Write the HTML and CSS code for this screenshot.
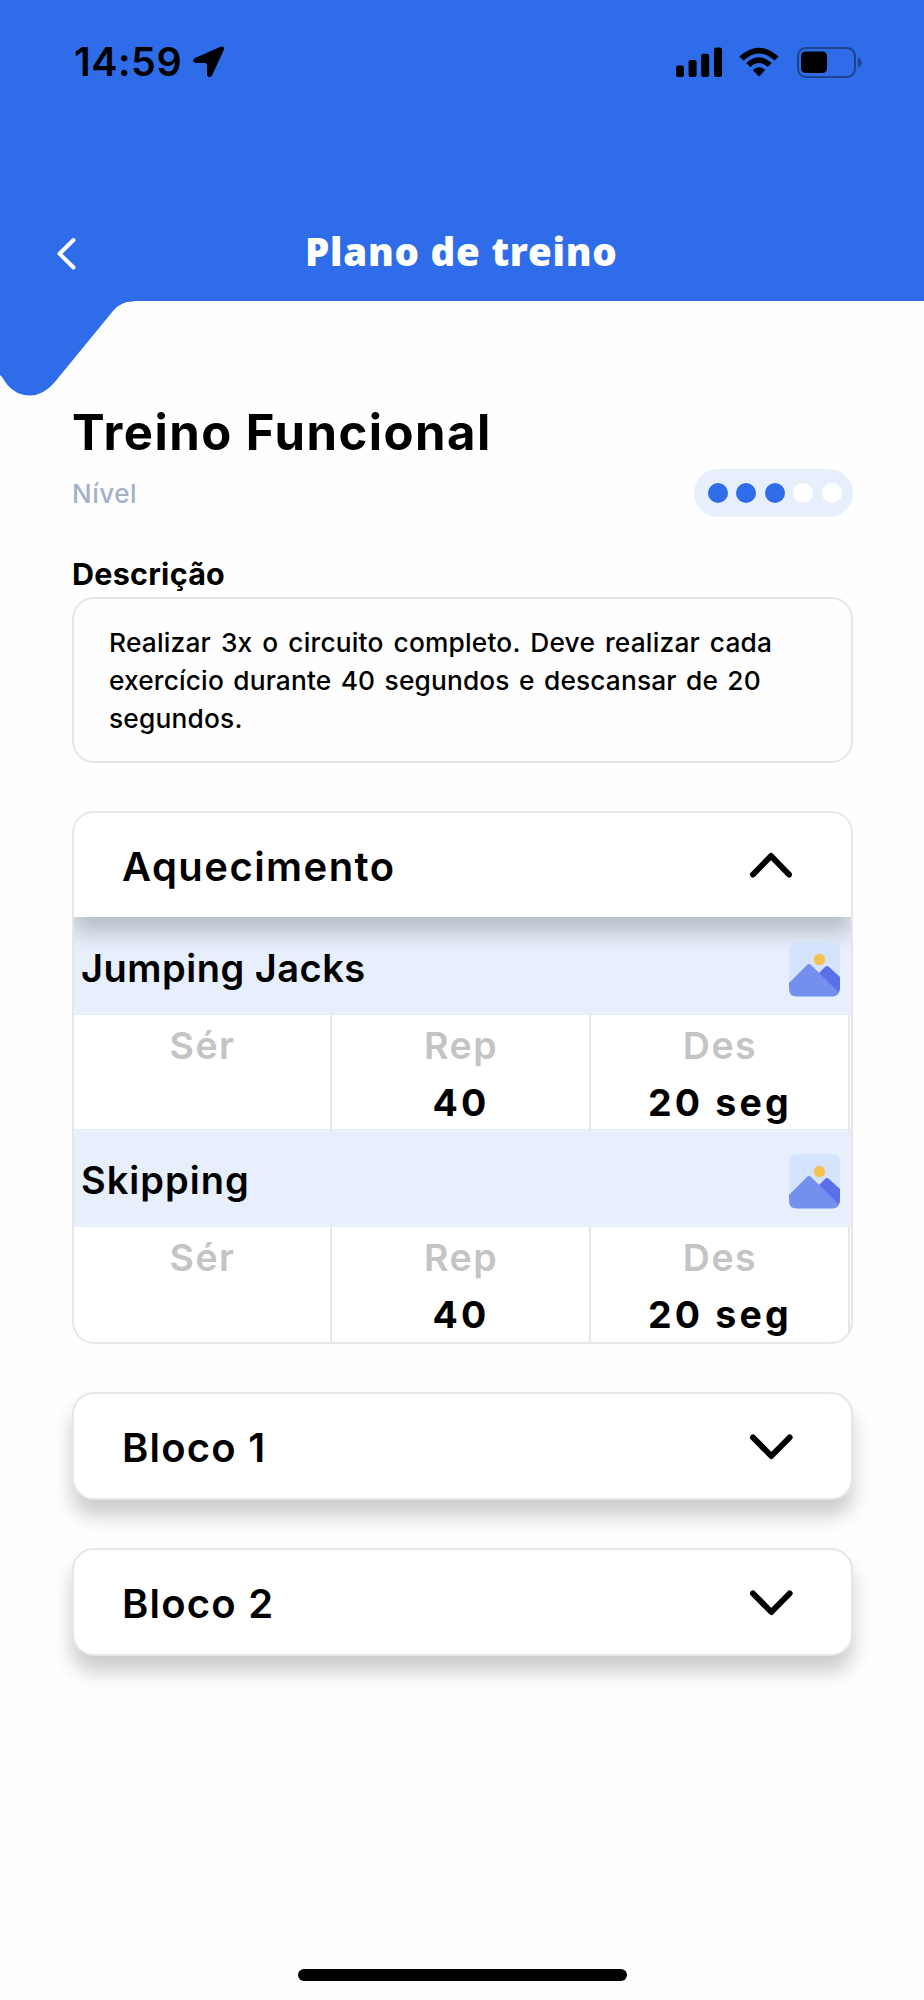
FILE: index.html
```html
<!DOCTYPE html>
<html lang="pt">

<head>
    <meta charset="UTF-8">
    <meta name="viewport" content="width=device-width, initial-scale=1.0">
    <title>Plano de treino</title>
    <link rel="stylesheet" href="styles.css">
</head>

<body>
    <header id="header">
        <div id="status-bar">
            <span id="time">14:59</span>
            <svg class="location" width="32" height="32" viewBox="0 0 32 32">
                <path d="M1.600 12.300 27.500 .7Q31.800-.5 30.800 4L19 29.500Q16.500 32.500 14 29.500V19Q14 17 12 17H3Q-2 15.500 1.600 12.300Z"/>
            </svg>
            <svg class="signal" width="47" height="30" viewBox="0 0 47 30">
                <rect x="0" y="18.500" width="8" height="11.500" rx="2.300"/>
                <rect x="12.600" y="13" width="8" height="17" rx="2.300"/>
                <rect x="25.200" y="6.700" width="8" height="23.300" rx="2.300"/>
                <rect x="38" y="0.500" width="8" height="29.500" rx="2.300"/>
            </svg>
            <svg class="wifi" width="40" height="30" viewBox="0 0 40 30">
                <path d="M.4 9.600Q20-8.200 39.600 9.600L35.500 13.400Q20-.6 4.500 13.400Z"/>
                <path d="M7.200 16.100Q20 4.500 32.800 16.100L28.600 20Q20 12.200 11.400 20Z"/>
                <path d="M13.800 23Q20 17.600 26.200 23L20 29.400Z"/>
            </svg>
            <svg class="battery" width="65" height="31" viewBox="0 0 65 31">
                <rect x="1" y="1" width="57" height="29" rx="8" fill="none" stroke="#1d438d" stroke-width="2"/>
                <rect x="4" y="4.500" width="26" height="21.500" rx="4.500"/>
                <path d="M61 10.500Q64.500 12 64.500 15.500T61 20.500Z" fill="#1d438d"/>
            </svg>
        </div>
        <div id="nav">
            <svg class="back" width="24" height="36" viewBox="0 0 24 36">
                <path d="M18.500 4 4.500 17.700 18.500 31.500" fill="none" stroke="#fff" stroke-width="4" stroke-linecap="round" stroke-linejoin="round"/>
            </svg>
            <h1>Plano de treino</h1>
        </div>
        <svg class="corner" width="134" height="96" viewBox="0 0 134 96">
            <path d="M0 0H134V1.500Q121 1 113 11L54 83Q43 95.500 30 95.500 16 95.500 7 84.500L2 77 0 75Z" fill="#2f6ce9"/>
        </svg>
    </header>

    <main id="main">
        <h2>Treino Funcional</h2>
        <div id="level">
            <span class="level-label">Nível</span>
            <div class="dots">
                <i class="on"></i><i class="on"></i><i class="on"></i><i></i><i></i>
            </div>
        </div>
        <h3>Descrição</h3>
        <p id="description">Realizar 3x o circuito completo. Deve realizar cada<br>
            <span class="line2">exercício durante 40 segundos e descansar de 20</span><br>
            segundos.</p>

        <section class="block open">
            <div class="block-head">
                <span class="name long">Aquecimento</span>
                <svg class="chevron" width="44" height="28" viewBox="0 0 44 28">
                    <path d="M4 23.500 22 5 40 23.500"/>
                </svg>
            </div>
            <div class="exercise">
                <span class="jumping">Jumping Jacks</span>
                <svg class="picture" width="51" height="55" viewBox="0 0 51 55">
                    <rect width="51" height="54.500" rx="7" fill="#d5e3fc"/>
                    <circle cx="30.500" cy="17.500" r="5.700" fill="#f5c24d"/>
                    <path d="M26 35 36 25Q38 23 40 25L51 35V46Q51 50 48 52Z" fill="#5b70e8"/>
                    <path d="M0 41 18 23Q20 21 22 23L50 50.500Q48 54.500 43 54.500H8Q0 54.500 0 47Z" fill="#7390ee"/>
                </svg>
            </div>
            <div class="sets">
                <div><span>Sér</span></div>
                <div><span>Rep</span><b>40</b></div>
                <div><span>Des</span><b>20 seg</b></div>
            </div>
            <div class="exercise">
                <span>Skipping</span>
                <svg class="picture" width="51" height="55" viewBox="0 0 51 55">
                    <rect width="51" height="54.500" rx="7" fill="#d5e3fc"/>
                    <circle cx="30.500" cy="17.500" r="5.700" fill="#f5c24d"/>
                    <path d="M26 35 36 25Q38 23 40 25L51 35V46Q51 50 48 52Z" fill="#5b70e8"/>
                    <path d="M0 41 18 23Q20 21 22 23L50 50.500Q48 54.500 43 54.500H8Q0 54.500 0 47Z" fill="#7390ee"/>
                </svg>
            </div>
            <div class="sets">
                <div><span>Sér</span></div>
                <div><span>Rep</span><b>40</b></div>
                <div><span>Des</span><b>20 seg</b></div>
            </div>
        </section>

        <section class="block">
            <div class="block-head">
                <span class="name">Bloco 1</span>
                <svg class="chevron" width="44" height="28" viewBox="0 0 44 28">
                    <path d="M4 5.500 22.300 24 40.600 5.500"/>
                </svg>
            </div>
        </section>

        <section class="block">
            <div class="block-head">
                <span class="name">Bloco 2</span>
                <svg class="chevron" width="44" height="28" viewBox="0 0 44 28">
                    <path d="M4 5.500 22.300 24 40.600 5.500"/>
                </svg>
            </div>
        </section>
    </main>
    <div id="home-bar"></div>
</body>

</html>
```
FILE: styles.css
```css
* {
    box-sizing: border-box;
}
body {
    margin: 0;
    height: 2000px;
    display: flex;
    flex-direction: column;
    background-color: #fefefe;
    color: #000;
    font-family: Inter, "Liberation Sans", sans-serif;
    white-space: nowrap;
    overflow: hidden;
}
h1, h2, h3, p {
    margin: 0;
}
svg {
    display: block;
    flex: none;
}

/* header */
#header {
    position: relative;
    height: 301px;
    background-color: #2f6ce9;
}
#status-bar {
    display: flex;
    align-items: center;
    height: 124px;
    padding-left: 74px;
}
#time {
    width: 119px;
    font-size: 39.500px;
    font-weight: 570;
    letter-spacing: 0.500px;
}
.signal {
    margin-left: 451px;
}
.wifi {
    margin-left: 16px;
}
.battery {
    margin-left: 18px;
}
#nav {
    display: flex;
    align-items: center;
    height: 60px;
    margin-top: 100px;
    padding-left: 55px;
}
h1 {
    margin-left: 226px;
    padding-bottom: 6px;
    font-family: "Noto Sans", "Open Sans", sans-serif;
    font-size: 38.500px;
    font-weight: 900;
    line-height: 54px;
    letter-spacing: 0.750px;
    color: white;
}
.corner {
    position: absolute;
    left: 0;
    top: 300px;
}

/* content */
#main {
    flex: 1;
    padding: 98px 71px 0 72px;
}
h2 {
    font-size: 49px;
    font-weight: 700;
    line-height: 68px;
    letter-spacing: 1.500px;
}
#level {
    display: flex;
    justify-content: space-between;
    align-items: center;
    height: 52px;
}
.level-label {
    font-size: 26px;
    font-weight: 550;
    letter-spacing: 0.500px;
    color: #a3b1c9;
}
.dots {
    display: flex;
    align-items: center;
    gap: 8.500px;
    width: 159px;
    height: 48px;
    padding-left: 13.500px;
    border-radius: 24px;
    background-color: #e7effc;
}
.dots i {
    width: 20px;
    height: 20px;
    border-radius: 50%;
    background-color: white;
}
.dots .on {
    background-color: #2f6ce9;
}
h3 {
    margin-top: 34px;
    padding-bottom: 2px;
    font-size: 30.500px;
    font-weight: 700;
    line-height: 42px;
    letter-spacing: 0.250px;
}
#description {
    height: 166px;
    padding: 25px 35px;
    border: 2px solid #e6e6e6;
    border-radius: 22px;
    font-size: 26.300px;
    font-weight: 550;
    line-height: 38px;
    letter-spacing: 0.200px;
    word-spacing: 2.700px;
}
.line2 {
    letter-spacing: 0.150px;
    word-spacing: 2.200px;
}

/* accordion */
.block {
    height: 108px;
    margin-top: 48px;
    border: 2px solid #e6e6e6;
    border-radius: 22px;
    background-color: white;
    box-shadow: 0 16px 20px rgba(0, 0, 0, 0.2);
}
.block.open {
    height: 533px;
    overflow: hidden;
    box-shadow: none;
}
.block-head {
    display: flex;
    justify-content: space-between;
    align-items: center;
    height: 104px;
    padding: 0 58px 0 48px;
}
.open .block-head {
    position: relative;
    background-color: white;
    box-shadow: 0 16px 20px rgba(0, 0, 0, 0.2);
}
.name {
    padding-top: 3px;
    font-size: 40px;
    font-weight: 580;
    letter-spacing: 1.200px;
}
.name.long {
    letter-spacing: 1.450px;
}
.chevron path {
    fill: none;
    stroke: #000;
    stroke-width: 6;
    stroke-linecap: round;
    stroke-linejoin: round;
}
.exercise {
    display: flex;
    justify-content: space-between;
    height: 98px;
    padding: 24px 11px 0 7px;
    background-color: #e7effc;
    font-size: 38px;
    font-weight: 580;
    line-height: 54px;
    letter-spacing: 1px;
}
.jumping {
    letter-spacing: 0.500px;
}
/* keeps the thumbnail above the header shadow */
.picture {
    position: relative;
    z-index: 1;
    margin-top: 1px;
}
.sets {
    display: grid;
    grid-template-columns: 258px 259px 259px;
    height: 114px;
}
.sets div {
    padding: 2px 0 0 1px;
    border-right: 2px solid #e6e6e6;
    text-align: center;
    font-size: 37.500px;
    font-weight: 580;
    line-height: 57px;
    color: #c4c4c4;
}
.sets span, .sets b {
    display: block;
}
.sets span {
    letter-spacing: 1.500px;
}
.sets b {
    color: #000;
    font-weight: 700;
    letter-spacing: 3.200px;
}

#home-bar {
    width: 329px;
    height: 12px;
    margin: 0 0 19px 298px;
    border-radius: 6px;
    background-color: #000;
}
```
